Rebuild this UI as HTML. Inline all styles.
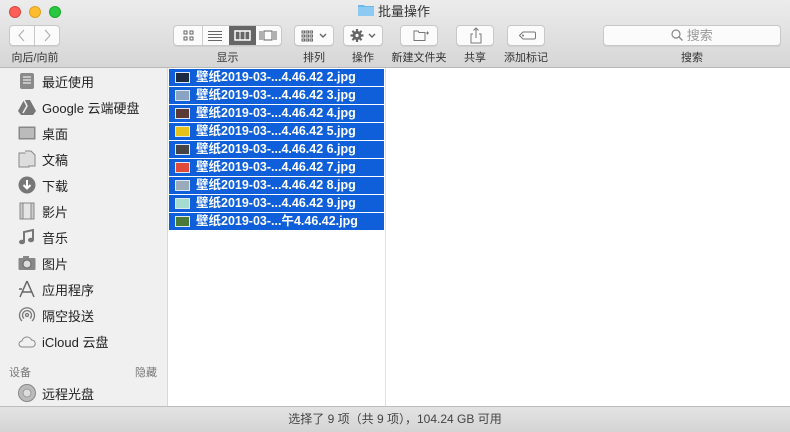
<!DOCTYPE html>
<html><head><meta charset="utf-8"><style>
*{margin:0;padding:0;box-sizing:border-box}
body{width:790px;height:432px;overflow:hidden;font-family:"Liberation Sans","Noto Sans CJK SC",sans-serif;background:#fff;position:relative}
.tb{position:absolute;left:0;top:0;width:790px;height:68px;background:linear-gradient(#ececec,#d6d6d6);border-bottom:1px solid #b9b9b9}
.dot{position:absolute;top:6px;width:12px;height:12px;border-radius:50%}
.btn{position:absolute;top:25px;height:21px;background:#fbfbfb;border:1px solid #c8c8c8;border-radius:4px;box-shadow:0 1px 0 rgba(0,0,0,.05)}
.lbl{position:absolute;top:49px;font-size:11px;color:#333;text-align:center}
.title{position:absolute;top:1px;left:380px;font-size:13px;color:#333}
.side{position:absolute;left:0;top:68px;width:168px;height:338px;background:#f0f0f0;border-right:1px solid #d8d8d8}
.si{position:absolute;left:42px;font-size:13px;color:#222;margin-top:-2px}
.ic{position:absolute;left:18px;margin-top:-2px}
.col{position:absolute;left:168px;top:68px;width:218px;height:338px;border-right:1px solid #e0e0e0;background:#fff}
.row{position:absolute;left:1px;width:215px;height:17px;background:#0e5fd9;color:#fff;font-size:12.5px;font-weight:bold;line-height:17px;padding-left:27px}
.th{position:absolute;left:6px;top:3px;width:15px;height:11px;border:1px solid #dfe7f5;background:#223}
.status{position:absolute;left:0;top:406px;width:790px;height:26px;background:linear-gradient(#e3e3e3,#d4d4d4);border-top:1px solid #bdbdbd;font-size:12px;color:#444;text-align:center;line-height:25px}
.hdr{position:absolute;font-size:11px;color:#777;margin-top:-2px}
</style></head><body>
<div class="tb">
<div class="dot" style="left:9px;background:#fc5f57;border:1px solid #e0443e"></div>
<div class="dot" style="left:29px;background:#fdbc2e;border:1px solid #dea123"></div>
<div class="dot" style="left:49px;background:#28c840;border:1px solid #1aab29"></div>
<svg style="position:absolute;left:358px;top:3px" width="16" height="13"><path d="M0 2h6l1 1h9v10H0z" fill="#6db8ec"/><rect x="0" y="4" width="16" height="9" fill="#8ccaf2"/></svg>
<div class="title" style="left:378px">批量操作</div>
<div class="btn" style="left:9px;width:26px;border-radius:4px 0 0 4px"><svg width="24" height="19"><path d="M14 4l-5 5.5 5 5.5" stroke="#aaa" fill="none"/></svg></div>
<div class="btn" style="left:34px;width:26px;border-radius:0 4px 4px 0"><svg width="24" height="19"><path d="M10 4l5 5.5-5 5.5" stroke="#aaa" fill="none"/></svg></div>
<div class="lbl" style="left:9px;width:52px">向后/向前</div>
<div class="btn" style="left:173px;width:109px;overflow:hidden">
<svg width="109" height="19"><g fill="none" stroke="#666"><rect x="10" y="5" width="3" height="3"/><rect x="16" y="5" width="3" height="3"/><rect x="10" y="11" width="3" height="3"/><rect x="16" y="11" width="3" height="3"/></g><line x1="28.5" y1="0" x2="28.5" y2="19" stroke="#ccc"/><g stroke="#666"><line x1="34" y1="5.5" x2="48" y2="5.5"/><line x1="34" y1="8.5" x2="48" y2="8.5"/><line x1="34" y1="11.5" x2="48" y2="11.5"/><line x1="34" y1="14.5" x2="48" y2="14.5"/></g><rect x="55" y="0" width="27" height="19" fill="#666"/><rect x="61" y="5" width="15" height="9" fill="none" stroke="#fff" stroke-width="1.5"/><line x1="66" y1="5" x2="66" y2="14" stroke="#fff"/><line x1="71" y1="5" x2="71" y2="14" stroke="#fff"/><g fill="none" stroke="#666"><rect x="90" y="5" width="8" height="9"/><line x1="86" y1="5" x2="86" y2="14"/><line x1="88" y1="5" x2="88" y2="14"/><line x1="100" y1="5" x2="100" y2="14"/><line x1="102" y1="5" x2="102" y2="14"/></g></svg></div>
<div class="lbl" style="left:173px;width:109px">显示</div>
<div class="btn" style="left:294px;width:40px"><svg width="40" height="19"><g fill="none" stroke="#666"><rect x="7" y="5" width="2.5" height="2"/><rect x="11" y="5" width="2.5" height="2"/><rect x="15" y="5" width="2.5" height="2"/><rect x="7" y="9" width="2.5" height="2"/><rect x="11" y="9" width="2.5" height="2"/><rect x="15" y="9" width="2.5" height="2"/><rect x="7" y="13" width="2.5" height="2"/><rect x="11" y="13" width="2.5" height="2"/><rect x="15" y="13" width="2.5" height="2"/><path d="M25 8l3 3 3-3" stroke-width="1.4"/></g></svg></div>
<div class="lbl" style="left:294px;width:40px">排列</div>
<div class="btn" style="left:343px;width:40px"><svg width="40" height="19"><circle cx="13" cy="9.5" r="4.5" fill="#666"/><g stroke="#666" stroke-width="2.2"><line x1="13" y1="3" x2="13" y2="16"/><line x1="6.5" y1="9.5" x2="19.5" y2="9.5"/><line x1="8.4" y1="4.9" x2="17.6" y2="14.1"/><line x1="17.6" y1="4.9" x2="8.4" y2="14.1"/></g><circle cx="13" cy="9.5" r="1.6" fill="#fbfbfb"/><path d="M25 8l3 3 3-3" stroke="#666" stroke-width="1.4" fill="none"/></svg></div>
<div class="lbl" style="left:343px;width:40px">操作</div>
<div class="btn" style="left:400px;width:38px"><svg width="38" height="19"><path d="M13 5h4l1 1.5h6v8H13z" fill="none" stroke="#777"/><path d="M25 7h3M26.5 5.5v3" stroke="#777"/></svg></div>
<div class="lbl" style="left:388px;width:62px">新建文件夹</div>
<div class="btn" style="left:456px;width:38px"><svg width="38" height="19"><path d="M16 8h-2v9h10V8h-2M19 2v10M16.5 4.5L19 2l2.5 2.5" fill="none" stroke="#777"/></svg></div>
<div class="lbl" style="left:456px;width:38px">共享</div>
<div class="btn" style="left:507px;width:38px"><svg width="38" height="19"><path d="M15 6h11a1.5 1.5 0 0 1 1.5 1.5v4a1.5 1.5 0 0 1-1.5 1.5H15l-3.5-3.5z" fill="none" stroke="#777"/><circle cx="15" cy="9.5" r="1" fill="#777"/></svg></div>
<div class="lbl" style="left:500px;width:52px">添加标记</div>
<div class="btn" style="left:603px;width:178px;font-size:13px;color:#999;text-align:center;line-height:19px"><svg width="12" height="12" style="vertical-align:-1px"><circle cx="5" cy="5" r="4" fill="none" stroke="#888" stroke-width="1.2"/><line x1="8" y1="8" x2="11.5" y2="11.5" stroke="#888" stroke-width="1.3"/></svg> 搜索</div>
<div class="lbl" style="left:603px;width:178px">搜索</div>
</div>
<div class="side">
<svg class="ic" style="top:6px" width="18" height="18"><rect x="2" y="1" width="14" height="16" rx="2" fill="#8a8a8a"/><g stroke="#fff"><line x1="5" y1="5" x2="13" y2="5"/><line x1="5" y1="8" x2="13" y2="8"/><line x1="5" y1="11" x2="13" y2="11"/></g></svg><div class="si" style="top:6px">最近使用</div>
<svg class="ic" style="top:32px" width="18" height="18"><path d="M6 2h6l6 11-3 4H3l-3-4z" fill="#777"/><path d="M6 2l3 6L5 15" stroke="#f0f0f0" stroke-width="1.5" fill="none"/></svg><div class="si" style="top:32px">Google 云端硬盘</div>
<svg class="ic" style="top:58px" width="18" height="18"><rect x="0.5" y="2.5" width="17" height="13" fill="#888"/><rect x="2" y="4" width="14" height="10" fill="#bbb"/></svg><div class="si" style="top:58px">桌面</div>
<svg class="ic" style="top:84px" width="18" height="18"><path d="M1 3h8l2 2v12H1z" fill="#ddd" stroke="#888"/><path d="M7 1h6l4 4v11H11" fill="#ddd" stroke="#888"/></svg><div class="si" style="top:84px">文稿</div>
<svg class="ic" style="top:110px" width="18" height="18"><circle cx="9" cy="9" r="8.5" fill="#777"/><path d="M9 4v8M5.5 9L9 12.5 12.5 9" stroke="#fff" stroke-width="2" fill="none"/></svg><div class="si" style="top:110px">下载</div>
<svg class="ic" style="top:136px" width="18" height="18"><rect x="2" y="1" width="14" height="16" fill="#ccc" stroke="#888"/><rect x="5" y="1" width="8" height="16" fill="#e5e5e5" stroke="#888"/></svg><div class="si" style="top:136px">影片</div>
<svg class="ic" style="top:162px" width="18" height="18"><path d="M6 14V4l9-2v10" stroke="#777" stroke-width="2" fill="none"/><ellipse cx="4" cy="14" rx="3" ry="2.3" fill="#777"/><ellipse cx="13" cy="12" rx="3" ry="2.3" fill="#777"/></svg><div class="si" style="top:162px">音乐</div>
<svg class="ic" style="top:188px" width="18" height="18"><rect x="0.5" y="4" width="17" height="12" rx="1" fill="#888"/><rect x="5" y="2" width="6" height="3" fill="#888"/><circle cx="9" cy="10" r="4" fill="#ddd" stroke="#666"/></svg><div class="si" style="top:188px">图片</div>
<svg class="ic" style="top:214px" width="18" height="18"><path d="M9 1L2 17M9 1l7 16M4 12h10M1 9h3" stroke="#666" stroke-width="1.5" fill="none"/></svg><div class="si" style="top:214px">应用程序</div>
<svg class="ic" style="top:240px" width="18" height="18"><g fill="none" stroke="#777" stroke-width="1.3"><path d="M4 15a7.5 7.5 0 1 1 10 0"/><path d="M6 12.5a4.5 4.5 0 1 1 6 0"/><circle cx="9" cy="9" r="1.5"/></g></svg><div class="si" style="top:240px">隔空投送</div>
<svg class="ic" style="top:266px" width="18" height="18"><path d="M4 15a3 3 0 0 1 0-6 5 5 0 0 1 9.5-1 3.5 3.5 0 0 1 .5 7z" fill="none" stroke="#888"/></svg><div class="si" style="top:266px">iCloud 云盘</div>
<div class="hdr" style="left:9px;top:298px">设备</div><div class="hdr" style="left:135px;top:298px">隐藏</div>
<svg class="ic" style="top:318px" width="18" height="18"><circle cx="9" cy="9" r="8.5" fill="#bbb" stroke="#888"/><circle cx="9" cy="9" r="4" fill="#ddd" stroke="#999"/></svg><div class="si" style="top:318px">远程光盘</div>
</div>
<div class="col">
<div class="row" style="top:1px"><div class="th" style="background:#1d2a44"></div>壁纸2019-03-...4.46.42 2.jpg</div>
<div class="row" style="top:19px"><div class="th" style="background:#8aa3c2"></div>壁纸2019-03-...4.46.42 3.jpg</div>
<div class="row" style="top:37px"><div class="th" style="background:#5a3a33"></div>壁纸2019-03-...4.46.42 4.jpg</div>
<div class="row" style="top:55px"><div class="th" style="background:#e8c21a"></div>壁纸2019-03-...4.46.42 5.jpg</div>
<div class="row" style="top:73px"><div class="th" style="background:#444"></div>壁纸2019-03-...4.46.42 6.jpg</div>
<div class="row" style="top:91px"><div class="th" style="background:#e04a3a"></div>壁纸2019-03-...4.46.42 7.jpg</div>
<div class="row" style="top:109px"><div class="th" style="background:#9ab"></div>壁纸2019-03-...4.46.42 8.jpg</div>
<div class="row" style="top:127px"><div class="th" style="background:#a6dcd0"></div>壁纸2019-03-...4.46.42 9.jpg</div>
<div class="row" style="top:145px"><div class="th" style="background:#4a7a3a"></div>壁纸2019-03-...午4.46.42.jpg</div>
</div>
<div class="status">选择了 9 项（共 9 项），104.24 GB 可用</div>
</body></html>
